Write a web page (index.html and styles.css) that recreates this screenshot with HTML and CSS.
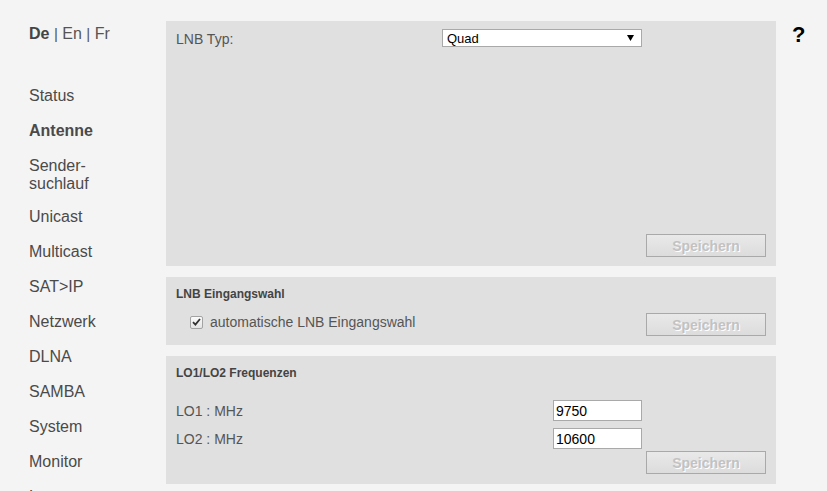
FILE: index.html
```html
<!DOCTYPE html>
<html lang="de">
<head>
<meta charset="utf-8">
<title>Antenne</title>
<link rel="stylesheet" href="styles.css">
</head>
<body>
<div class="page">
  <aside class="sidebar">
    <div class="lang"><b>De</b> <span class="sep">|</span> En <span class="sep">|</span> Fr</div>
    <ul class="nav">
      <li>Status</li>
      <li class="active">Antenne</li>
      <li class="two">Sender-<br>suchlauf</li>
      <li>Unicast</li>
      <li>Multicast</li>
      <li>SAT&gt;IP</li>
      <li>Netzwerk</li>
      <li>DLNA</li>
      <li>SAMBA</li>
      <li>System</li>
      <li>Monitor</li>
      <li>Logout</li>
    </ul>
  </aside>
  <main class="main">
    <section class="panel panel-type">
      <div class="type-row">
        <span class="label">LNB Typ:</span>
        <div class="select"><span>Quad</span><svg width="7" height="6" viewBox="0 0 7 6"><path d="M0 0H7L3.5 6Z" fill="#000"/></svg></div>
      </div>
      <div class="actions"><button class="btn">Speichern</button></div>
    </section>
    <section class="panel panel-input">
      <h3 class="title">LNB Eingangswahl</h3>
      <div class="check-row">
        <label class="check"><span class="box"><svg width="9" height="8" viewBox="0 0 9 8"><path d="M1 4.2L3.4 6.6L8 1" fill="none" stroke="#333" stroke-width="1.8"/></svg></span><span class="label">automatische LNB Eingangswahl</span></label>
        <button class="btn">Speichern</button>
      </div>
    </section>
    <section class="panel panel-freq">
      <h3 class="title">LO1/LO2 Frequenzen</h3>
      <div class="freq-grid">
        <span class="label">LO1 : MHz</span><input class="num" type="text" value="9750">
        <span class="label">LO2 : MHz</span><input class="num" type="text" value="10600">
      </div>
      <div class="actions"><button class="btn">Speichern</button></div>
    </section>
  </main>
  <div class="help">?</div>
</div>
</body>
</html>
```
FILE: styles.css
```css
html, body {
  margin: 0;
  padding: 0;
  background: #f4f4f4;
  font-family: "Liberation Sans", Arial, sans-serif;
  color: #4a4a4a;
}
.page {
  display: flex;
  align-items: flex-start;
}
.sidebar {
  width: 137px;
  padding-left: 29px;
  padding-top: 25px;
  font-size: 16px;
  line-height: 18px;
}
.lang {
  color: #555;
}
.lang b {
  color: #444;
}
.lang .sep {
  font-size: 15px;
}
.nav {
  list-style: none;
  margin: 44px 0 0;
  padding: 0;
}
.nav li {
  margin-bottom: 17px;
  color: #4a4a4a;
}
.nav li.two {
  margin-bottom: 15px;
}
.nav li.active {
  font-weight: bold;
}
.main {
  width: 610px;
  margin-top: 21px;
  display: flex;
  flex-direction: column;
  gap: 11px;
}
.panel {
  background: #e0e0e0;
  box-sizing: border-box;
  padding: 10px;
}
.label {
  font-size: 14px;
  color: #555;
}
.panel-type {
  height: 245px;
  padding-top: 8px;
  padding-bottom: 9px;
  display: flex;
  flex-direction: column;
  justify-content: space-between;
}
.type-row {
  display: grid;
  grid-template-columns: 266px 200px;
  align-items: center;
}
.type-row .label {
  position: relative;
  top: 1px;
}
.select {
  box-sizing: border-box;
  height: 18px;
  background: #fff;
  border: 1px solid #a9a9a9;
  display: flex;
  align-items: center;
  justify-content: space-between;
  padding: 0 7px 0 4px;
  font-size: 13px;
  color: #000;
}
.actions {
  display: flex;
  justify-content: flex-end;
}
.btn {
  box-sizing: border-box;
  width: 120px;
  height: 23px;
  border: 1px solid #a9a9a9;
  background: linear-gradient(#e9e9e9, #dcdcdc);
  font-family: "Liberation Sans", Arial, sans-serif;
  font-weight: bold;
  font-size: 14px;
  color: #c2c2c2;
  text-shadow: 1px 1px 0 #fff;
  padding: 0;
  border-radius: 0;
}
.title {
  margin: 0;
  font-size: 12px;
  line-height: 14px;
  font-weight: bold;
  color: #444;
}
.panel-input {
  padding-bottom: 9px;
}
.check-row {
  display: flex;
  justify-content: space-between;
  align-items: flex-start;
  margin-top: 12px;
}
.check {
  display: flex;
  align-items: center;
  padding-left: 14px;
  margin-top: 1px;
}
.box {
  box-sizing: border-box;
  width: 13px;
  height: 13px;
  border: 1px solid #a3a3a3;
  border-radius: 2px;
  background: linear-gradient(#fbfbfb, #e4e4e4);
  display: flex;
  align-items: center;
  justify-content: center;
  margin-right: 7px;
}
.freq-grid {
  display: grid;
  grid-template-columns: 377px 89px;
  row-gap: 7px;
  align-items: center;
  margin-top: 20px;
}
.num {
  box-sizing: border-box;
  width: 89px;
  height: 21px;
  border: 1px solid #a9a9a9;
  background: #fff;
  font-family: "Liberation Sans", Arial, sans-serif;
  font-size: 14px;
  color: #000;
  padding: 0 2px;
  margin: 0;
}
.panel-freq .actions {
  margin-top: 2px;
}
.help {
  margin-left: 16px;
  margin-top: 23px;
  font-size: 22px;
  font-weight: bold;
  color: #000;
  line-height: 24px;
}
```
